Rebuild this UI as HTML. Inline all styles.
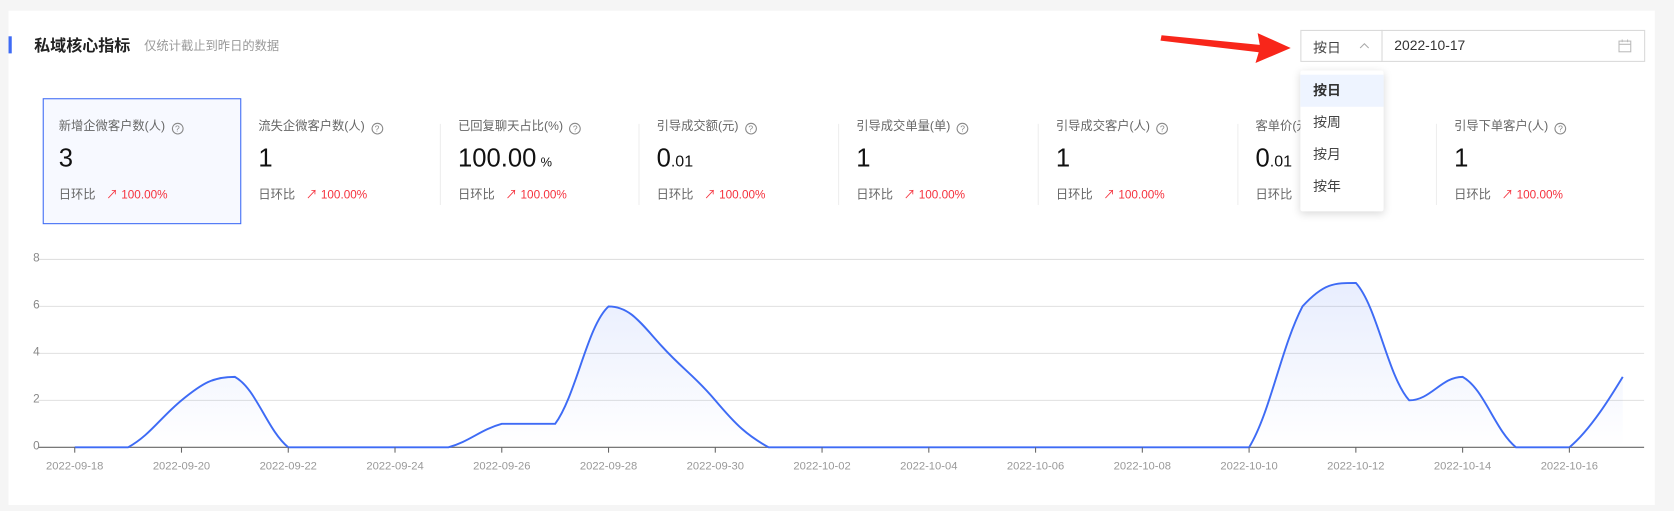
<!DOCTYPE html>
<html><head><meta charset="utf-8">
<style>
*{margin:0;padding:0;box-sizing:border-box}
html,body{width:1674px;height:511px;overflow:hidden;background:#f5f5f5;font-family:"Liberation Sans","Noto Sans CJK SC",sans-serif}
#wrap{position:absolute;left:0;top:0;width:1568px;height:479px;transform:scale(1.0676);transform-origin:0 0}
.abs{position:absolute}
.card{left:8px;top:10px;width:1542px;height:463px;background:#fff}
.lbl{font-size:11.5px;color:#666;white-space:nowrap}
.q{display:inline-block;width:11px;height:11px;border:1px solid #888;border-radius:50%;font-size:8px;line-height:9px;text-align:center;color:#888;margin-left:6px;vertical-align:-1px}
.val{font-size:24px;color:#111;white-space:nowrap}
.cmp{font-size:11.5px;color:#666;white-space:nowrap}
.cmp span{color:#f5313d;margin-left:10px;font-size:11px}
.div{width:1px;height:76px;background:#eee;top:116px}
.xl{font-size:10.5px;color:#999;top:431px;width:80px;text-align:center}
.yl{font-size:11px;color:#888;left:31px}
.dd div{height:30px;line-height:30px;padding-left:12px;font-size:13px;color:#444}
</style></head><body>
<div id="wrap">
<div class="abs card"></div>
<div class="abs" style="left:8px;top:34px;width:3px;height:16px;background:#3e6bf5"></div>
<div class="abs" style="left:32px;top:32px;font-size:15px;font-weight:bold;color:#222">私域核心指标</div>
<div class="abs" style="left:135px;top:35px;font-size:11.5px;color:#999">仅统计截止到昨日的数据</div>

<svg class="abs" style="left:1080px;top:25px" width="140" height="35"><polygon points="8,8 100,17 98,6 129,20 96,34 99,24 7,13" fill="#f8261a"/></svg>

<div class="abs" style="left:1218px;top:28px;width:323px;height:30px;border:1px solid #d9d9d9;background:#fff"></div>
<div class="abs" style="left:1294px;top:28px;width:1px;height:30px;background:#d9d9d9"></div>
<div class="abs" style="left:1230px;top:34px;font-size:13px;color:#444">按日</div>
<svg class="abs" style="left:1273px;top:39px" width="10" height="8"><path d="M1 6 L5 2 L9 6" fill="none" stroke="#aaa" stroke-width="1"/></svg>
<div class="abs" style="left:1306px;top:35px;font-size:13px;color:#333">2022-10-17</div>
<svg class="abs" style="left:1515px;top:36px" width="14" height="14"><rect x="1.5" y="2.5" width="11" height="10" fill="none" stroke="#bbb"/><line x1="1.5" y1="5.5" x2="12.5" y2="5.5" stroke="#bbb"/><line x1="4.5" y1="1" x2="4.5" y2="3.5" stroke="#bbb"/><line x1="9.5" y1="1" x2="9.5" y2="3.5" stroke="#bbb"/></svg>

<div class="abs" style="left:40px;top:92px;width:186px;height:118px;border:1px solid #3e6bf5;background:#f7f9ff"></div>
<div class="abs div" style="left:412px"></div>
<div class="abs div" style="left:598px"></div>
<div class="abs div" style="left:785px"></div>
<div class="abs div" style="left:972px"></div>
<div class="abs div" style="left:1159px"></div>
<div class="abs div" style="left:1345px"></div>

<div id="metrics"></div>

<div class="abs dd" style="left:1218px;top:66px;width:78px;height:132px;background:#fff;box-shadow:0 2px 8px rgba(0,0,0,0.15);border-radius:2px;padding-top:4px">
<div style="background:#eef4ff;font-weight:bold;color:#333">按日</div><div>按周</div><div>按月</div><div>按年</div>
</div>

<svg id="chart" class="abs" style="left:0;top:0" width="1568" height="479"></svg>
<div id="labels"></div>
</div>
<script>
var m=[["新增企微客户数(人)","3",""],["流失企微客户数(人)","1",""],["已回复聊天占比(%)","100.00","%"],["引导成交额(元)","0",".01"],["引导成交单量(单)","1",""],["引导成交客户(人)","1",""],["客单价(元)","0",".01"],["引导下单客户(人)","1",""]];
var xs=[55,242,429,615,802,989,1176,1362],h="";
m.forEach(function(a,i){var x=xs[i];
h+='<div class="abs lbl" style="left:'+x+'px;top:110px">'+a[0]+'<span class="q">?</span></div>';
var suf=a[2]?(a[2]=="%"?'<span style="font-size:12px;margin-left:4px">%</span>':'<span style="font-size:15px">'+a[2]+'</span>'):'';
h+='<div class="abs val" style="left:'+x+'px;top:135px">'+a[1]+suf+'</div>';
h+='<div class="abs cmp" style="left:'+x+'px;top:174px">日环比<span>↗ 100.00%</span></div>';});
document.getElementById('metrics').innerHTML=h;
var v=[0,0,2,3,0,0,0,0,1,1,6,4.3,2,0,0,0,0,0,0,0,0,0,0,6,7,2,3,0,0,3];
var P=v.map(function(y,i){return [70+50*i,419-22*y]});
var s='';
[0,2,4,6,8].forEach(function(k){var y=419-22*k;s+='<line x1="36" x2="1540" y1="'+y+'" y2="'+y+'" stroke="'+(k?'#e0e0e0':'#666')+'" stroke-width="1"/>';});
var d='M'+P[0][0]+' '+P[0][1];
for(var i=0;i<P.length-1;i++){var p0=P[Math.max(i-1,0)],p1=P[i],p2=P[i+1],p3=P[Math.min(i+2,P.length-1)];
var lo=Math.min(p1[1],p2[1]),hi=Math.max(p1[1],p2[1]);
var c1x=p1[0]+(p2[0]-p0[0])*0.2,c1y=p1[1]+(p2[1]-p0[1])*0.25;
var c2x=p2[0]-(p3[0]-p1[0])*0.2,c2y=p2[1]-(p3[1]-p1[1])*0.25;
c1y=Math.min(hi,Math.max(lo,c1y));c2y=Math.min(hi,Math.max(lo,c2y));
d+=' C'+c1x+' '+c1y+' '+c2x+' '+c2y+' '+p2[0]+' '+p2[1];}
s+='<defs><linearGradient id="gr" x1="0" y1="0" x2="0" y2="1"><stop offset="0" stop-color="#3e6bf5" stop-opacity="0.12"/><stop offset="1" stop-color="#3e6bf5" stop-opacity="0"/></linearGradient></defs>';
s+='<path d="'+d+' L1520 419 L70 419 Z" fill="url(#gr)"/>';
s+='<path d="'+d+'" fill="none" stroke="#3e6bf5" stroke-width="1.8"/>';
for(var t=0;t<15;t++){s+='<line x1="'+(70+100*t)+'" x2="'+(70+100*t)+'" y1="419" y2="424" stroke="#666"/>';}
document.getElementById('chart').innerHTML=s;
var L='',dates=["09-18","09-20","09-22","09-24","09-26","09-28","09-30","10-02","10-04","10-06","10-08","10-10","10-12","10-14","10-16"];
dates.forEach(function(dd,i){L+='<div class="abs xl" style="left:'+(30+100*i)+'px">2022-'+dd+'</div>';});
[0,2,4,6,8].forEach(function(k){L+='<div class="abs yl" style="top:'+(412-22*k)+'px">'+k+'</div>';});
document.getElementById('labels').innerHTML=L;
</script>
</body></html>
